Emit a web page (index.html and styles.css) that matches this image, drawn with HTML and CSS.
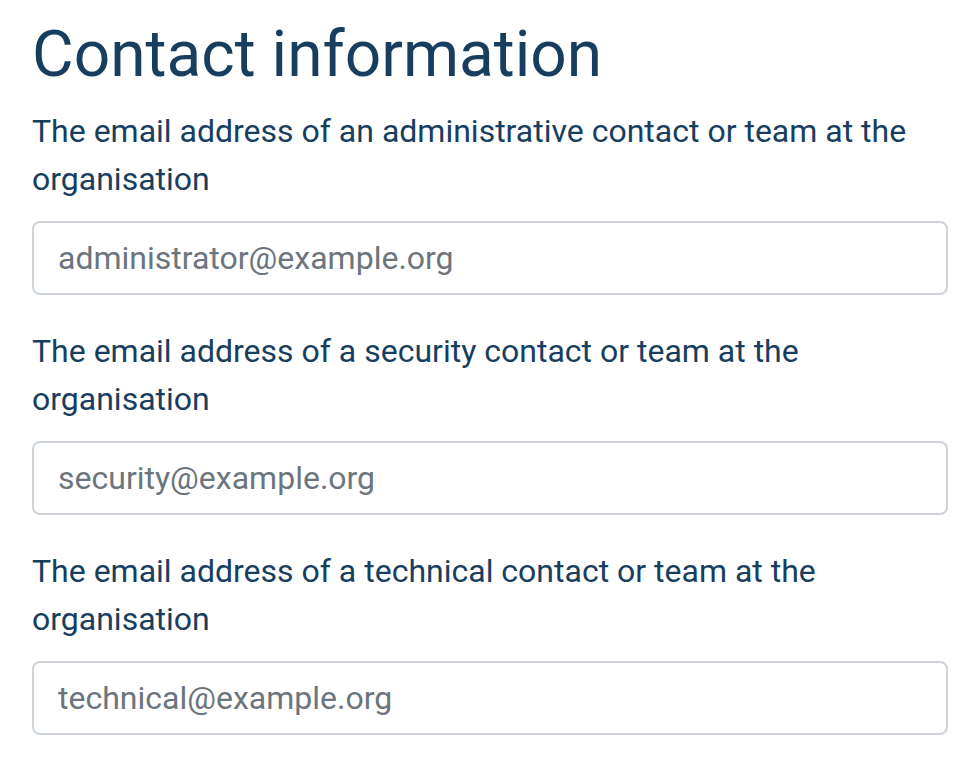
FILE: index.html
```html
<!DOCTYPE html>
<html lang="en">
<head>
<meta charset="utf-8">
<title>Contact information</title>
<link rel="stylesheet" href="styles.css">
</head>
<body>
<main class="page">
  <h1 class="title">Contact information</h1>
  <div class="field">
    <label class="label" for="admin">The email address of an administrative contact or team at the organisation</label>
    <input class="input" id="admin" type="email" placeholder="administrator@example.org">
  </div>
  <div class="field">
    <label class="label" for="security">The email address of a security contact or team at the organisation</label>
    <input class="input" id="security" type="email" placeholder="security@example.org">
  </div>
  <div class="field">
    <label class="label" for="technical">The email address of a technical contact or team at the organisation</label>
    <input class="input" id="technical" type="email" placeholder="technical@example.org">
  </div>
</main>
</body>
</html>
```
FILE: styles.css
```css
html, body {
  margin: 0;
  padding: 0;
  background: #ffffff;
}
body {
  font-family: Roboto, "Liberation Sans", sans-serif;
  color: #173e5e;
}
.page {
  padding: 17px 24px 0 32px;
  display: flex;
  flex-direction: column;
}
.title {
  margin: 0 0 13px 0;
  font-size: 64px;
  font-weight: 400;
  line-height: 1.2;
  color: #173e5e;
}
.field {
  display: flex;
  flex-direction: column;
  margin-bottom: 32px;
}
.label {
  font-size: 32px;
  line-height: 48px;
  margin-bottom: 18px;
  color: #173e5e;
}
.input {
  box-sizing: border-box;
  height: 74px;
  width: 100%;
  border: 2px solid #ced4da;
  border-radius: 8px;
  padding: 0 24px;
  font-family: Roboto, "Liberation Sans", sans-serif;
  font-size: 32px;
  color: #495057;
  background: #fff;
  outline: none;
}
.input::placeholder {
  color: #6c757d;
  opacity: 1;
}
```
